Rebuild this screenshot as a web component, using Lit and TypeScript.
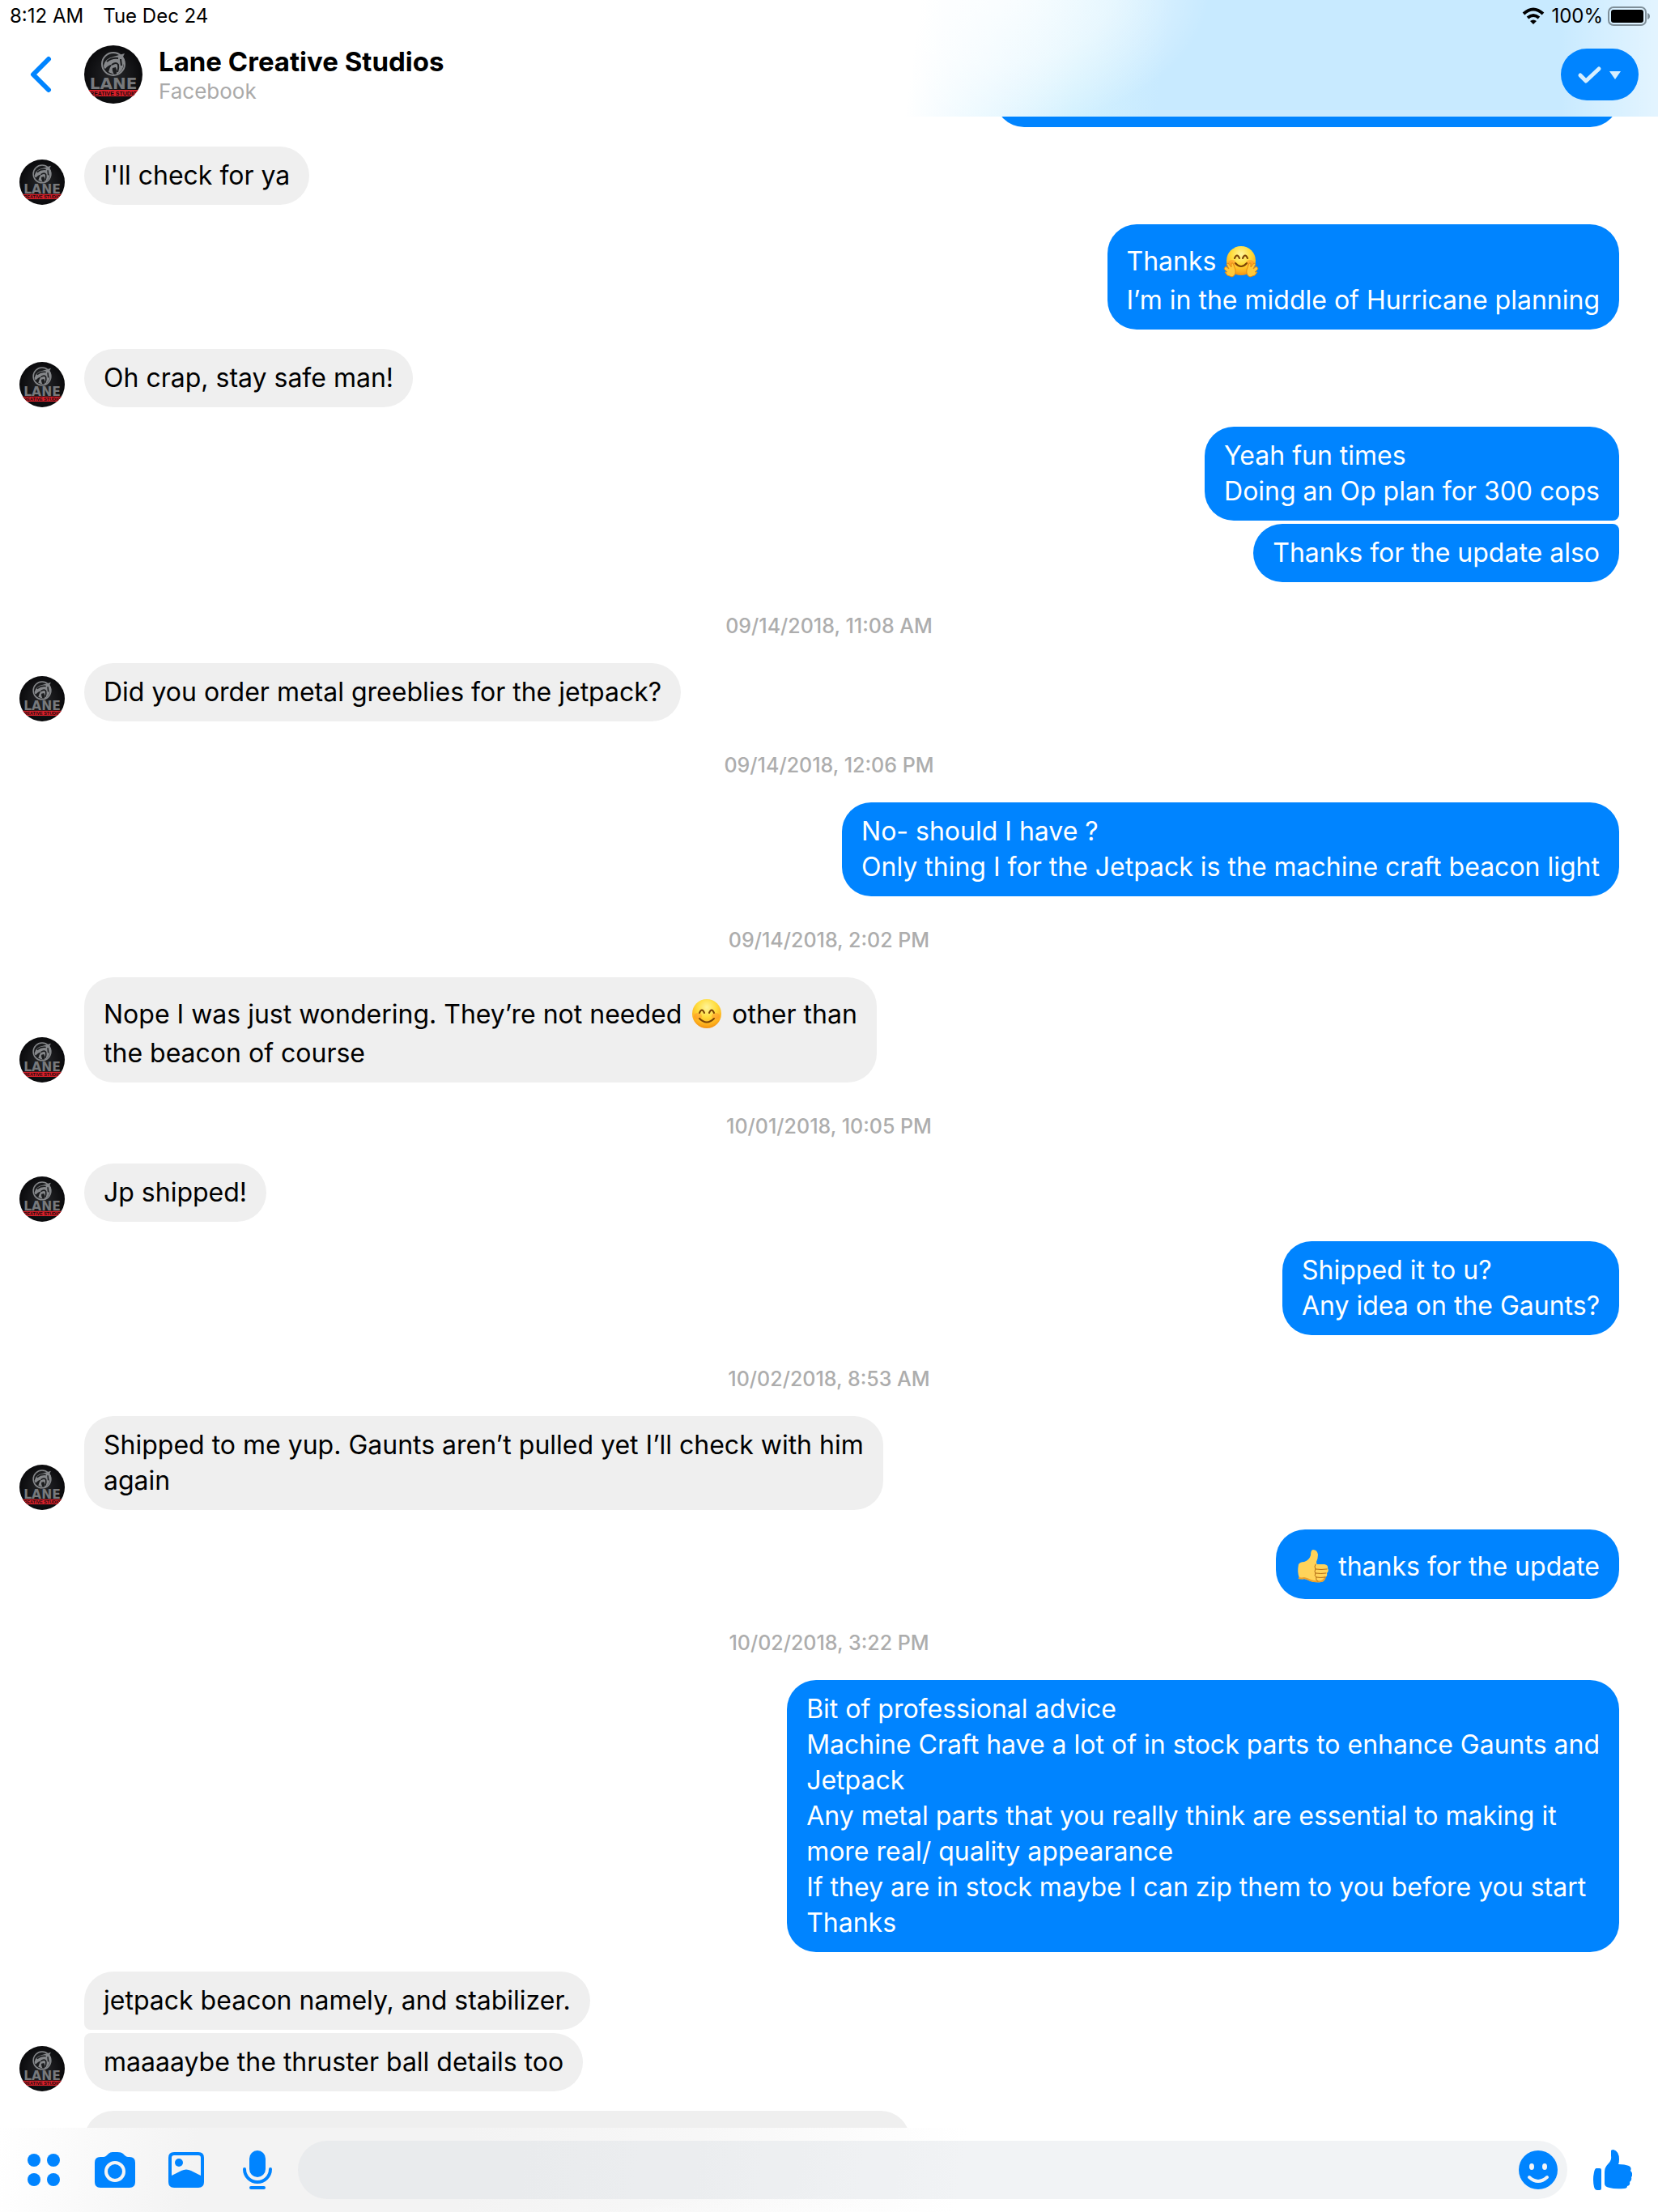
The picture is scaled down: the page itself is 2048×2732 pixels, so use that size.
import { LitElement, html, css, svg, nothing } from "lit";
import { customElement, property } from "lit/decorators.js";

type Emoji = "hug" | "smile" | "thumb";
type Part = string | { emoji: Emoji };
type Item =
  | { kind: "time"; text: string }
  | { kind: "group"; from: "them" | "me"; bubbles: Part[][][] }
  | { kind: "blank"; from: "them" | "me" };

const thread: Item[] = [
  { kind: "blank", from: "me" },
  { kind: "group", from: "them", bubbles: [[["I'll check for ya"]]] },
  {
    kind: "group",
    from: "me",
    bubbles: [[["Thanks ", { emoji: "hug" }], ["I’m in the middle of Hurricane planning"]]],
  },
  { kind: "group", from: "them", bubbles: [[["Oh crap, stay safe man!"]]] },
  {
    kind: "group",
    from: "me",
    bubbles: [[["Yeah fun times"], ["Doing an Op plan for 300 cops"]], [["Thanks for the update also"]]],
  },
  { kind: "time", text: "09/14/2018, 11:08 AM" },
  { kind: "group", from: "them", bubbles: [[["Did you order metal greeblies for the jetpack?"]]] },
  { kind: "time", text: "09/14/2018, 12:06 PM" },
  {
    kind: "group",
    from: "me",
    bubbles: [[["No- should I have ?"], ["Only thing I for the Jetpack is the machine craft beacon light"]]],
  },
  { kind: "time", text: "09/14/2018, 2:02 PM" },
  {
    kind: "group",
    from: "them",
    bubbles: [
      [
        ["Nope I was just wondering. They’re not needed ", { emoji: "smile" }, " other than"],
        ["the beacon of course"],
      ],
    ],
  },
  { kind: "time", text: "10/01/2018, 10:05 PM" },
  { kind: "group", from: "them", bubbles: [[["Jp shipped!"]]] },
  { kind: "group", from: "me", bubbles: [[["Shipped it to u?"], ["Any idea on the Gaunts?"]]] },
  { kind: "time", text: "10/02/2018, 8:53 AM" },
  {
    kind: "group",
    from: "them",
    bubbles: [[["Shipped to me yup. Gaunts aren’t pulled yet I’ll check with him"], ["again"]]],
  },
  { kind: "group", from: "me", bubbles: [[[{ emoji: "thumb" }, " thanks for the update"]]] },
  { kind: "time", text: "10/02/2018, 3:22 PM" },
  {
    kind: "group",
    from: "me",
    bubbles: [
      [
        ["Bit of professional advice"],
        ["Machine Craft have a lot of in stock parts to enhance Gaunts and"],
        ["Jetpack"],
        ["Any metal parts that you really think are essential to making it"],
        ["more real/ quality appearance"],
        ["If they are in stock maybe I can zip them to you before you start"],
        ["Thanks"],
      ],
    ],
  },
  {
    kind: "group",
    from: "them",
    bubbles: [[["jetpack beacon namely, and stabilizer."]], [["maaaaybe the thruster ball details too"]]],
  },
  { kind: "blank", from: "them" },
];

const faceDefs = (id: string) => svg`
  <defs>
    <radialGradient id=${id} cx="50%" cy="28%" r="75%">
      <stop offset="0" stop-color="#fff59a"></stop>
      <stop offset="0.45" stop-color="#ffdc3c"></stop>
      <stop offset="0.8" stop-color="#fdae1c"></stop>
      <stop offset="1" stop-color="#f08a10"></stop>
    </radialGradient>
  </defs>`;

const emojiArt: Record<Emoji, { label: string; art: unknown }> = {
  smile: {
    label: "smiling face",
    art: svg`${faceDefs("face")}
      <circle cx="22" cy="31" r="18" fill="url(#face)"></circle>
      <ellipse cx="11" cy="34" rx="5" ry="4" fill="#ff7a2a" opacity="0.35"></ellipse>
      <ellipse cx="33" cy="34" rx="5" ry="4" fill="#ff7a2a" opacity="0.35"></ellipse>
      <g fill="none" stroke="#7a4305" stroke-width="2" stroke-linecap="round">
        <path d="M13 30q3 -7 6 0M25 30q3 -7 6 0"></path>
        <path d="M13 37q9 9 18 0"></path>
      </g>`,
  },
  hug: {
    label: "hugging face",
    art: svg`${faceDefs("hugface")}
      <circle cx="22" cy="31" r="18" fill="url(#hugface)"></circle>
      <ellipse cx="11" cy="34" rx="5" ry="4" fill="#ff6a2a" opacity="0.35"></ellipse>
      <ellipse cx="33" cy="34" rx="5" ry="4" fill="#ff6a2a" opacity="0.35"></ellipse>
      <g fill="none" stroke="#7a4305" stroke-width="2" stroke-linecap="round">
        <path d="M14 28q3 -7 6 0M24 28q3 -7 6 0"></path>
        <path d="M15 34q7 8 14 0"></path>
      </g>
      <g fill="#ffc93a" stroke="#e58a12" stroke-width="1" stroke-linejoin="round">
        <path d="M3 38l4 3 -3 -6 2 -1 4 5 0 -5 2 0 3 8q1 7 -4 9l-6 -2 -3 -4 3 0 -4 -4z"></path>
        <path d="M41 38l-4 3 3 -6 -2 -1 -4 5 0 -5 -2 0 -3 8q-1 7 4 9l6 -2 3 -4 -3 0 4 -4z"></path>
      </g>`,
  },
  thumb: {
    label: "thumbs up",
    art: svg`
      <path d="M4 29q2 -3 7 -3q6 -2 8 -8q0 -7 3 -7q5 0 6 6q0 5 -2 9q0 3 1 3l9 0q5 1 4 5q2 3 -1 6q1 4 -2 5q0 5 -5 6q-8 1 -13 -1q-6 -3 -8 -3q-4 1 -6 -1q-3 -7 -1 -17z" fill="#ffd35a"></path>
      <path d="M4 46q4 1 7 0q4 1 8 3q6 2 13 1q4 -1 5 -6" fill="none" stroke="#eda02a" stroke-width="2"></path>
      <path d="M25 29q-2 3 0 6q-2 3 0 5q-2 3 1 5q-1 4 2 5M25 35q7 1 14 0M25 40q7 1 13 0M26 45q5 1 11 0" fill="none" stroke="#b06a14" stroke-width="1" stroke-linecap="round"></path>`,
  },
};

const emoji = (name: Emoji) => html`<svg
  class="emoji"
  viewBox="0 0 44 58"
  role="img"
  aria-label=${emojiArt[name].label}
>${emojiArt[name].art}</svg>`;

@customElement("studio-avatar")
export class StudioAvatar extends LitElement {
  static styles = css`
    :host {
      display: block;
      width: 56px;
      height: 56px;
      flex: none;
    }
    :host([large]) {
      width: 72px;
      height: 72px;
    }
    svg {
      display: block;
      width: 100%;
      height: 100%;
    }
    .name {
      font: 700 20px "DejaVu Sans", sans-serif;
      fill: #77797c;
    }
    .tag {
      font: 700 7px "Liberation Sans Narrow", "Liberation Sans", sans-serif;
      fill: #17090a;
    }
  `;
  render() {
    return html`<svg viewBox="0 0 72 72" role="img" aria-label="Lane Creative Studios">
      <defs>
        <clipPath id="disc"><circle cx="36" cy="36" r="36"></circle></clipPath>
        <radialGradient id="ink"><stop offset="0" stop-color="#26272a"></stop><stop offset="1" stop-color="#0a0a0c"></stop></radialGradient>
      </defs>
      <g clip-path="url(#disc)">
        <rect width="72" height="72" fill="url(#ink)"></rect>
        <circle cx="36" cy="23" r="14" fill="#1b1c1e" stroke="#85878a" stroke-width="2"></circle>
        <path d="M24 25q2 -9 12 -11l14 -4 -2 4 2 4 -2 9q-2 6 -8 9q1 -5 -1 -9l-4 1q-1 3 2 8l-7 -3q1 -5 4 -9q-4 0 -8 5q-2 -1 -2 -4z" fill="#85878a"></path>
        <path d="M28 20q6 -5 14 -4M34 24q6 -4 8 0q1 4 -1 9M45 17l1 8" fill="none" stroke="#1b1c1e" stroke-width="2"></path>
        <text class="name" x="36" y="54" text-anchor="middle">LANE</text>
        <rect y="55" width="72" height="8" fill="#d9202a"></rect>
        <text class="tag" x="36" y="62" text-anchor="middle">CREATIVE STUDIOS</text>
      </g>
    </svg>`;
  }
}

@customElement("chat-row")
export class ChatRow extends LitElement {
  @property({ attribute: false }) item!: Item;

  static styles = css`
    :host {
      display: block;
    }
    .time {
      display: block;
      padding: 38px 0 30px;
      font-size: 25px;
      line-height: 32px;
      font-weight: 500;
      text-align: center;
      color: #adadad;
    }
    .row {
      display: flex;
      align-items: flex-end;
      gap: 24px;
    }
    .me {
      justify-content: flex-end;
      padding-right: 24px;
    }
    .stack {
      display: flex;
      flex-direction: column;
      align-items: flex-start;
      gap: 4px;
      max-width: 70%;
    }
    .me .stack {
      align-items: flex-end;
    }
    .bubble {
      padding: 14px 24px;
      border-radius: 36px;
      background: #efefef;
      color: #000;
      font-size: 32px;
      line-height: 44px;
      white-space: pre-wrap;
    }
    .me .bubble {
      background: #0084ff;
      color: #fff;
    }
    .them .stack .bubble:not(:last-child) {
      border-bottom-left-radius: 8px;
    }
    .them .stack .bubble:not(:first-child) {
      border-top-left-radius: 8px;
    }
    .me .stack .bubble:not(:last-child) {
      border-bottom-right-radius: 8px;
    }
    .me .stack .bubble:not(:first-child) {
      border-top-right-radius: 8px;
    }
    .blank {
      box-sizing: border-box;
      height: 72px;
      width: 51%;
    }
    .me .blank {
      width: 39%;
    }
    .gutter {
      width: 56px;
      flex: none;
    }
    .emoji {
      width: 44px;
      height: 58px;
      vertical-align: -15px;
    }
  `;

  private line(parts: Part[]) {
    return parts.map((p) => (typeof p === "string" ? p : emoji(p.emoji)));
  }

  render() {
    const it = this.item;
    if (it.kind === "time") return html`<time class="time">${it.text}</time>`;
    if (it.kind === "blank")
      return html`<div class="row ${it.from}" aria-hidden="true">
        ${it.from === "them" ? html`<span class="gutter"></span>` : nothing}
        <div class="bubble blank"></div>
      </div>`;
    return html`<div class="row ${it.from}">
      ${it.from === "them" ? html`<studio-avatar></studio-avatar>` : nothing}
      <div class="stack">
        ${it.bubbles.map(
          (b) =>
            html`<div class="bubble">${b.map((l, i) => html`${i ? html`<br />` : nothing}${this.line(l)}`)}</div>`
        )}
      </div>
    </div>`;
  }
}

@customElement("app-root")
export class AppRoot extends LitElement {
  static styles = css`
    :host {
      display: flex;
      flex-direction: column;
      height: 100vh;
      background: #fff;
      color: #000;
      font-family: Inter, "Liberation Sans", sans-serif;
    }
    button {
      border: 0;
      padding: 0;
      margin: 0;
      background: none;
      color: #0084ff;
      display: flex;
      align-items: center;
      justify-content: center;
      flex: none;
    }
    svg {
      display: block;
    }
    .top {
      flex: none;
      background:
        linear-gradient(90deg, transparent 94%, rgba(255, 255, 255, 0.5) 100%),
        radial-gradient(ellipse 13% 120% at 60% -10%, rgba(255, 255, 255, 0.75) 10%, rgba(255, 255, 255, 0.5) 55%, transparent 100%),
        linear-gradient(98deg, #fff 55%, #e9f8ff 60%, #d3f1fe 65%, #c8eaff 70%);
    }
    .status {
      display: flex;
      align-items: center;
      height: 40px;
      padding: 0 10px 0 12px;
      font-size: 24px;
      line-height: 40px;
    }
    .date {
      margin-left: 24px;
      flex: 1;
    }
    .wifi {
      width: 28px;
      height: 22px;
      margin-right: 8px;
    }
    .battery {
      width: 52px;
      height: 24px;
      margin-left: 6px;
    }
    .bar {
      display: flex;
      align-items: center;
      height: 104px;
      padding: 0 24px 0 12px;
      box-sizing: border-box;
    }
    .back {
      width: 78px;
      height: 72px;
      margin-right: 14px;
    }
    .who {
      flex: 1;
      padding-left: 20px;
      display: flex;
      flex-direction: column;
    }
    .title {
      margin: 0;
      font-size: 33px;
      line-height: 42px;
      font-weight: 700;
    }
    .via {
      font-size: 26px;
      line-height: 32px;
      color: #aaa;
    }
    .pill {
      width: 96px;
      height: 64px;
      border-radius: 32px;
      background: #0084ff;
      color: #d6efff;
    }
    .thread {
      flex: 1 1 0;
      min-height: 0;
      overflow: hidden;
      padding: 0 24px;
    }
    .messages {
      display: flex;
      flex-direction: column;
      gap: 24px;
      margin-top: -59px;
    }
    .stamp {
      margin: -24px 0;
    }
    .composer {
      flex: none;
      display: flex;
      align-items: center;
      height: 104px;
      padding: 0 10px;
      background:
        linear-gradient(172deg, transparent 50%, rgba(255, 255, 255, 0.8) 100%),
        linear-gradient(98deg, #fff 0%, #f3f3f3 12%, #f3f3f3 28%, #f7f7f7 42%, #fff 58%);
    }
    .tool {
      width: 88px;
      height: 72px;
    }
    .field {
      flex: 1;
      display: flex;
      align-items: center;
      height: 72px;
      margin: 0 10px 0 6px;
      padding: 0 12px 0 28px;
      border-radius: 36px;
      background: rgba(213, 218, 225, 0.32);
    }
    .input {
      flex: 1;
      min-width: 0;
      height: 72px;
      border: 0;
      padding: 0;
      outline: 0;
      background: none;
      font: 400 32px Inter, sans-serif;
    }
    .like {
      width: 92px;
      height: 72px;
    }
  `;

  render() {
    return html`
      <header class="top">
        <div class="status">
          <span>8:12 AM</span>
          <span class="date">Tue Dec 24</span>
          <svg class="wifi" viewBox="0 0 28 22" fill="none" stroke="#000" stroke-width="4" role="img" aria-label="Wi-Fi">
            <path d="M2 8q12 -11 24 0"></path>
            <path d="M7 13q7 -6 14 0"></path>
            <path d="M14 21l-4 -4q4 -3 8 0z" fill="#000" stroke="none"></path>
          </svg>
          <span>100%</span>
          <svg class="battery" viewBox="0 0 52 24" role="img" aria-label="Battery full">
            <rect x="1" y="1" width="46" height="22" rx="6" fill="none" stroke="#7f8f99" stroke-width="2"></rect>
            <rect x="4" y="4" width="40" height="16" rx="3"></rect>
            <path d="M49 8q3 1 3 4t-3 4z" fill="#7f8f99"></path>
          </svg>
        </div>
        <div class="bar">
          <button class="back" aria-label="Back">
            <svg width="28" height="46" viewBox="0 0 28 46" fill="none" stroke="currentColor" stroke-width="6" stroke-linecap="round" stroke-linejoin="round">
              <path d="M23 4L4 23l19 19"></path>
            </svg>
          </button>
          <studio-avatar large></studio-avatar>
          <div class="who">
            <h1 class="title">Lane Creative Studios</h1>
            <span class="via">Facebook</span>
          </div>
          <button class="pill" aria-label="Mark as done">
            <svg width="56" height="24" viewBox="0 0 56 24">
              <path d="M4 13l7 7L27 5" fill="none" stroke="currentColor" stroke-width="5" stroke-linecap="round" stroke-linejoin="round"></path>
              <path d="M40 8h14l-7 10z" fill="currentColor"></path>
            </svg>
          </button>
        </div>
      </header>
      <main class="thread">
        <div class="messages">
          ${thread.map((item) => html`<chat-row class=${item.kind === "time" ? "stamp" : "msg"} .item=${item}></chat-row>`)}
        </div>
      </main>
      <footer class="composer">
        <button class="tool" aria-label="Apps">
          <svg width="40" height="40" viewBox="0 0 40 40" fill="currentColor">
            <circle cx="8" cy="8" r="8"></circle><circle cx="32" cy="8" r="8"></circle>
            <circle cx="8" cy="32" r="8"></circle><circle cx="32" cy="32" r="8"></circle>
          </svg>
        </button>
        <button class="tool" aria-label="Camera">
          <svg width="50" height="44" viewBox="0 0 50 44">
            <path d="M7 6h4q2 0 4 -2l2 -2q2 -2 5 -2h6q5 0 7 2l2 2q2 2 4 2h2q7 0 7 7v24q0 7 -7 7H7q-7 0 -7 -7V13q0 -7 7 -7z" fill="currentColor"></path>
            <circle cx="25" cy="24" r="11" fill="none" stroke="#f4f4f4" stroke-width="4"></circle>
          </svg>
        </button>
        <button class="tool" aria-label="Photos">
          <svg width="44" height="44" viewBox="0 0 44 44">
            <path fill-rule="evenodd" fill="currentColor" d="M7 0h30q7 0 7 7v30q0 7 -7 7H7q-7 0 -7 -7V7q0 -7 7 -7zM7 4q-3 0 -3 3v22l12 -6q6 -3 12 0l12 6V7q0 -3 -3 -3z"></path>
            <circle cx="13" cy="13" r="5" fill="currentColor"></circle>
          </svg>
        </button>
        <button class="tool" aria-label="Voice message">
          <svg width="36" height="48" viewBox="0 0 36 48" fill="none" stroke="currentColor" stroke-width="4" stroke-linecap="round">
            <rect x="8" y="0" width="20" height="33" rx="10" fill="currentColor" stroke="none"></rect>
            <path d="M2 23a16 16 0 0 0 32 0M10 46h16"></path>
          </svg>
        </button>
        <div class="field">
          <input class="input" type="text" aria-label="Message" />
          <button aria-label="Emoji">
            <svg width="48" height="48" viewBox="0 0 48 48">
              <circle cx="24" cy="24" r="24" fill="currentColor"></circle>
              <ellipse cx="16" cy="20" rx="3" ry="4" fill="#f3f4f6"></ellipse>
              <ellipse cx="32" cy="20" rx="3" ry="4" fill="#f3f4f6"></ellipse>
              <path d="M13 33q11 10 22 0" fill="none" stroke="#f3f4f6" stroke-width="4" stroke-linecap="round"></path>
            </svg>
          </button>
        </div>
        <button class="like" aria-label="Like">
          <svg width="48" height="50" viewBox="0 0 48 50" fill="currentColor">
            <path d="M4 23h4q2 0 2 2v23q0 2 -2 2H5q-3 0 -4 -4q-2 -9 0 -18q1 -5 3 -5z"></path>
            <path d="M22 1q1 -1 3 -1q7 2 7 12q0 4 -1 6q8 0 13 2q4 2 2 6q4 4 1 8q1 4 -2 6q1 4 -3 5q0 3 -4 3q-11 1 -18 -1q-6 -1 -6 -5V28q0 -6 4 -10q5 -5 4 -10z"></path>
          </svg>
        </button>
      </footer>
    `;
  }
}
